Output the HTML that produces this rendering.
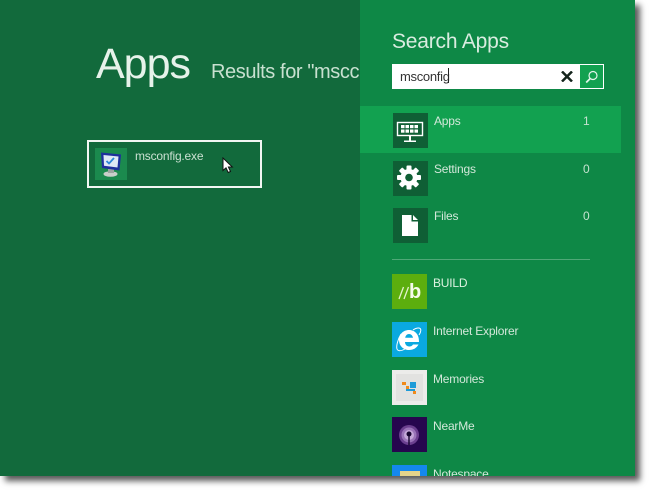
<!DOCTYPE html>
<html>
<head>
<meta charset="utf-8">
<style>
html,body{margin:0;padding:0;background:#fff;}
body{width:650px;height:491px;position:relative;overflow:hidden;font-family:"Liberation Sans",sans-serif;}
#shot{position:absolute;left:0;top:0;width:635px;height:476px;background:#126a3c;box-shadow:5px 5px 6px 0 rgba(0,0,0,.65);overflow:hidden;}
#panel{position:absolute;left:360px;top:0;width:275px;height:476px;background:#0e8846;overflow:hidden;}
#in{position:absolute;left:1px;top:0;width:274px;height:476px;}
.t{position:absolute;white-space:nowrap;}
.l{color:#d3e8da;font-size:12px;letter-spacing:-.2px;line-height:14px;}
.n{color:#c4e2cf;font-size:12px;line-height:14px;}
.tile{position:absolute;left:32px;width:35px;height:35px;}
.dk{background:#0f5f35;}
svg{position:absolute;display:block;}
</style>
</head>
<body>
<div id="shot">
  <div class="t" style="left:96px;top:36px;font-size:43px;line-height:56px;color:#e6f2ea;letter-spacing:-1px;font-weight:normal;">Apps</div>
  <div class="t" style="left:211px;top:60px;font-size:20px;line-height:24px;color:#c8e0d0;letter-spacing:-.4px;">Results for "mscc</div>

  <div style="position:absolute;left:87px;top:140px;width:171px;height:44px;border:2px solid #f2f7f3;"></div>
  <div style="position:absolute;left:95px;top:148px;width:32px;height:32px;background:#1b8a4e;"></div>
  <svg style="left:95px;top:148px" width="32" height="32" viewBox="0 0 32 32">
    <ellipse cx="15.500" cy="26" rx="7" ry="2.800" fill="#c9cfca"/>
    <rect x="13" y="21" width="6" height="4" fill="#9aa5a0"/>
    <path d="M6 4.500 L26 6.500 L24.500 22.500 L7 20 Z" fill="#1e2f9c"/>
    <path d="M8.500 7 L23.500 8.500 L22.500 19.500 L9 17.800 Z" fill="#dfe8f5"/>
    <path d="M11.500 13 L14 15.500 L19 10" fill="none" stroke="#2b86d8" stroke-width="1.800"/>
  </svg>
  <div class="t l" style="left:135px;top:149px;color:#c9e0d1;">msconfig.exe</div>
  <svg style="left:222px;top:157px" width="13" height="18" viewBox="0 0 13 18">
    <path d="M1 1 L1 13.500 L4 10.800 L6.200 15.500 L8.500 14.500 L6.400 10 L10.300 10 Z" fill="#fff" stroke="#111" stroke-width="1"/>
  </svg>

  <div id="panel"><div id="in">
    <div class="t" style="left:31px;top:29px;font-size:21px;line-height:26px;color:#d9ece0;letter-spacing:-.2px;">Search Apps</div>
    <div style="position:absolute;left:31px;top:64px;width:212px;height:25px;background:#fff;"></div>
    <div class="t" style="left:39px;top:69px;font-size:13px;line-height:15px;color:#333;letter-spacing:-.3px;">msconfig</div>
    <div style="position:absolute;left:87px;top:68px;width:1px;height:15px;background:#222;"></div>
    <svg style="left:200px;top:71px" width="12" height="11" viewBox="0 0 12 11">
      <path d="M1 .5 L11 10.500 M11 .5 L1 10.500" stroke="#14241c" stroke-width="2.500"/>
    </svg>
    <div style="position:absolute;left:219px;top:65px;width:23px;height:23px;background:#12a150;"></div>
    <svg style="left:219px;top:65px" width="23" height="23" viewBox="0 0 23 23">
      <circle cx="13" cy="10.500" r="4" fill="none" stroke="#e4f4ea" stroke-width="1.200"/>
      <path d="M10.200 13.500 L6.200 17.500" stroke="#e4f4ea" stroke-width="1.700"/>
    </svg>

    <div style="position:absolute;left:-1px;top:106px;width:261px;height:47px;background:#12a150;"></div>
    <div class="tile dk" style="top:113px;"></div>
    <svg style="left:32px;top:113px" width="35" height="35" viewBox="0 0 35 35">
      <rect x="4.500" y="9.500" width="25" height="13" fill="none" stroke="#fff" stroke-width="1.400"/>
      <g fill="#fff">
        <rect x="8" y="12" width="3.500" height="3.200"/><rect x="12.500" y="12" width="3.500" height="3.200"/><rect x="17" y="12" width="3.500" height="3.200"/><rect x="21.500" y="12" width="3.500" height="3.200"/>
        <rect x="8" y="16.500" width="3.500" height="3.200"/><rect x="12.500" y="16.500" width="3.500" height="3.200"/><rect x="17" y="16.500" width="3.500" height="3.200"/><rect x="21.500" y="16.500" width="3.500" height="3.200"/>
        <rect x="16" y="23" width="2" height="4.500"/><rect x="11" y="27.500" width="12" height="1.500"/>
      </g>
    </svg>
    <div class="t l" style="left:73px;top:114px;">Apps</div>
    <div class="t n" style="left:222px;top:114px;">1</div>

    <div class="tile dk" style="top:161px;"></div>
    <svg style="left:32px;top:161px" width="35" height="35" viewBox="0 0 35 35">
      <g fill="#fff" transform="translate(16 16.500)">
        <circle r="8.500"/>
        <rect x="-2.500" y="-12" width="5" height="24" rx="1"/>
        <rect x="-2.500" y="-12" width="5" height="24" rx="1" transform="rotate(45)"/>
        <rect x="-2.500" y="-12" width="5" height="24" rx="1" transform="rotate(90)"/>
        <rect x="-2.500" y="-12" width="5" height="24" rx="1" transform="rotate(135)"/>
      </g>
      <circle cx="16" cy="16.500" r="3.800" fill="#0f5f35"/>
    </svg>
    <div class="t l" style="left:73px;top:162px;">Settings</div>
    <div class="t n" style="left:222px;top:162px;">0</div>

    <div class="tile dk" style="top:208px;"></div>
    <svg style="left:32px;top:208px" width="35" height="35" viewBox="0 0 35 35">
      <path d="M9 7 L18.500 7 L18.500 13.500 L25 13.500 L25 28 L9 28 Z M20 7 L25 12 L20 12 Z" fill="#fff"/>
    </svg>
    <div class="t l" style="left:73px;top:209px;">Files</div>
    <div class="t n" style="left:222px;top:209px;">0</div>

    <div style="position:absolute;left:31px;top:259px;width:198px;height:1px;background:#4fa877;"></div>

    <div class="tile" style="left:31px;top:274px;background:#5cae0e;"></div>
    <svg style="left:31px;top:274px" width="35" height="35" viewBox="0 0 35 35">
      <path d="M7 25 L11.500 13 M12 25 L16.500 13" stroke="#e4f2cc" stroke-width="1.300" fill="none"/>
    </svg>
    <div class="t" style="left:48px;top:280px;font-size:20px;line-height:25px;color:#f4fbea;font-weight:bold;">b</div>
    <div class="t l" style="left:72px;top:276px;color:#dcf2e0;">BUILD</div>

    <div class="tile" style="left:31px;top:322px;background:#0aa9e0;"></div>
    <svg style="left:31px;top:322px" width="35" height="35" viewBox="0 0 35 35">
      <path d="M17 8 C11 8 7 12.500 7 18 C7 24 11.500 28 17 28 C21.500 28 24.500 26 26.500 22.500 L21 22.500 C20 24 18.800 24.500 17.300 24.500 C14.800 24.500 13 22.500 13 20 L27 20 C27.300 12.500 23 8 17 8 Z M13.200 15.800 C13.600 13.500 15 12 17 12 C19 12 20.600 13.500 21 15.800 Z" fill="#fff" fill-rule="evenodd"/>
      <path d="M21 8 C25.500 5 29 5.500 28.800 8.500 C28.700 10 28 11.500 27 13 M9 12 C6 17 4 24 5 27 C6 29.500 9.500 29 13 27" fill="none" stroke="#fff" stroke-width="1"/>
    </svg>
    <div class="t l" style="left:72px;top:324px;">Internet Explorer</div>

    <div class="tile" style="left:31px;top:370px;background:#ececea;"></div>
    <div style="position:absolute;left:35px;top:374px;width:27px;height:27px;background:#e2e2e0;"></div>
    <div style="position:absolute;left:49px;top:382px;width:6px;height:6px;background:#1e9bd8;"></div>
    <div style="position:absolute;left:41px;top:382px;width:4px;height:3px;background:#f08a1c;"></div>
    <div style="position:absolute;left:45px;top:386px;width:3px;height:3px;background:#f08a1c;"></div>
    <div style="position:absolute;left:45px;top:389px;width:9px;height:2px;background:#1e9bd8;"></div>
    <div style="position:absolute;left:52px;top:391px;width:3px;height:3px;background:#f08a1c;"></div>
    <div class="t l" style="left:72px;top:372px;">Memories</div>

    <div class="tile" style="left:31px;top:417px;background:#26064e;"></div>
    <svg style="left:31px;top:417px" width="35" height="35" viewBox="0 0 35 35">
      <circle cx="17" cy="18" r="10" fill="#6b3f8f"/>
      <circle cx="17" cy="18" r="7.500" fill="#9a74b8"/>
      <circle cx="17" cy="18" r="5" fill="#c4a8d8"/>
      <circle cx="17" cy="17" r="2.500" fill="#16062e"/>
      <rect x="16.300" y="17" width="1.400" height="11" fill="#16062e"/>
    </svg>
    <div class="t l" style="left:72px;top:419px;">NearMe</div>

    <div class="tile" style="left:31px;top:465px;height:11px;background:#1488ee;"></div>
    <div style="position:absolute;left:39px;top:471px;width:20px;height:5px;background:#e6d48a;"></div>
    <div class="t l" style="left:72px;top:467px;">Notespace</div>
  </div></div>
</div>
</body>
</html>
